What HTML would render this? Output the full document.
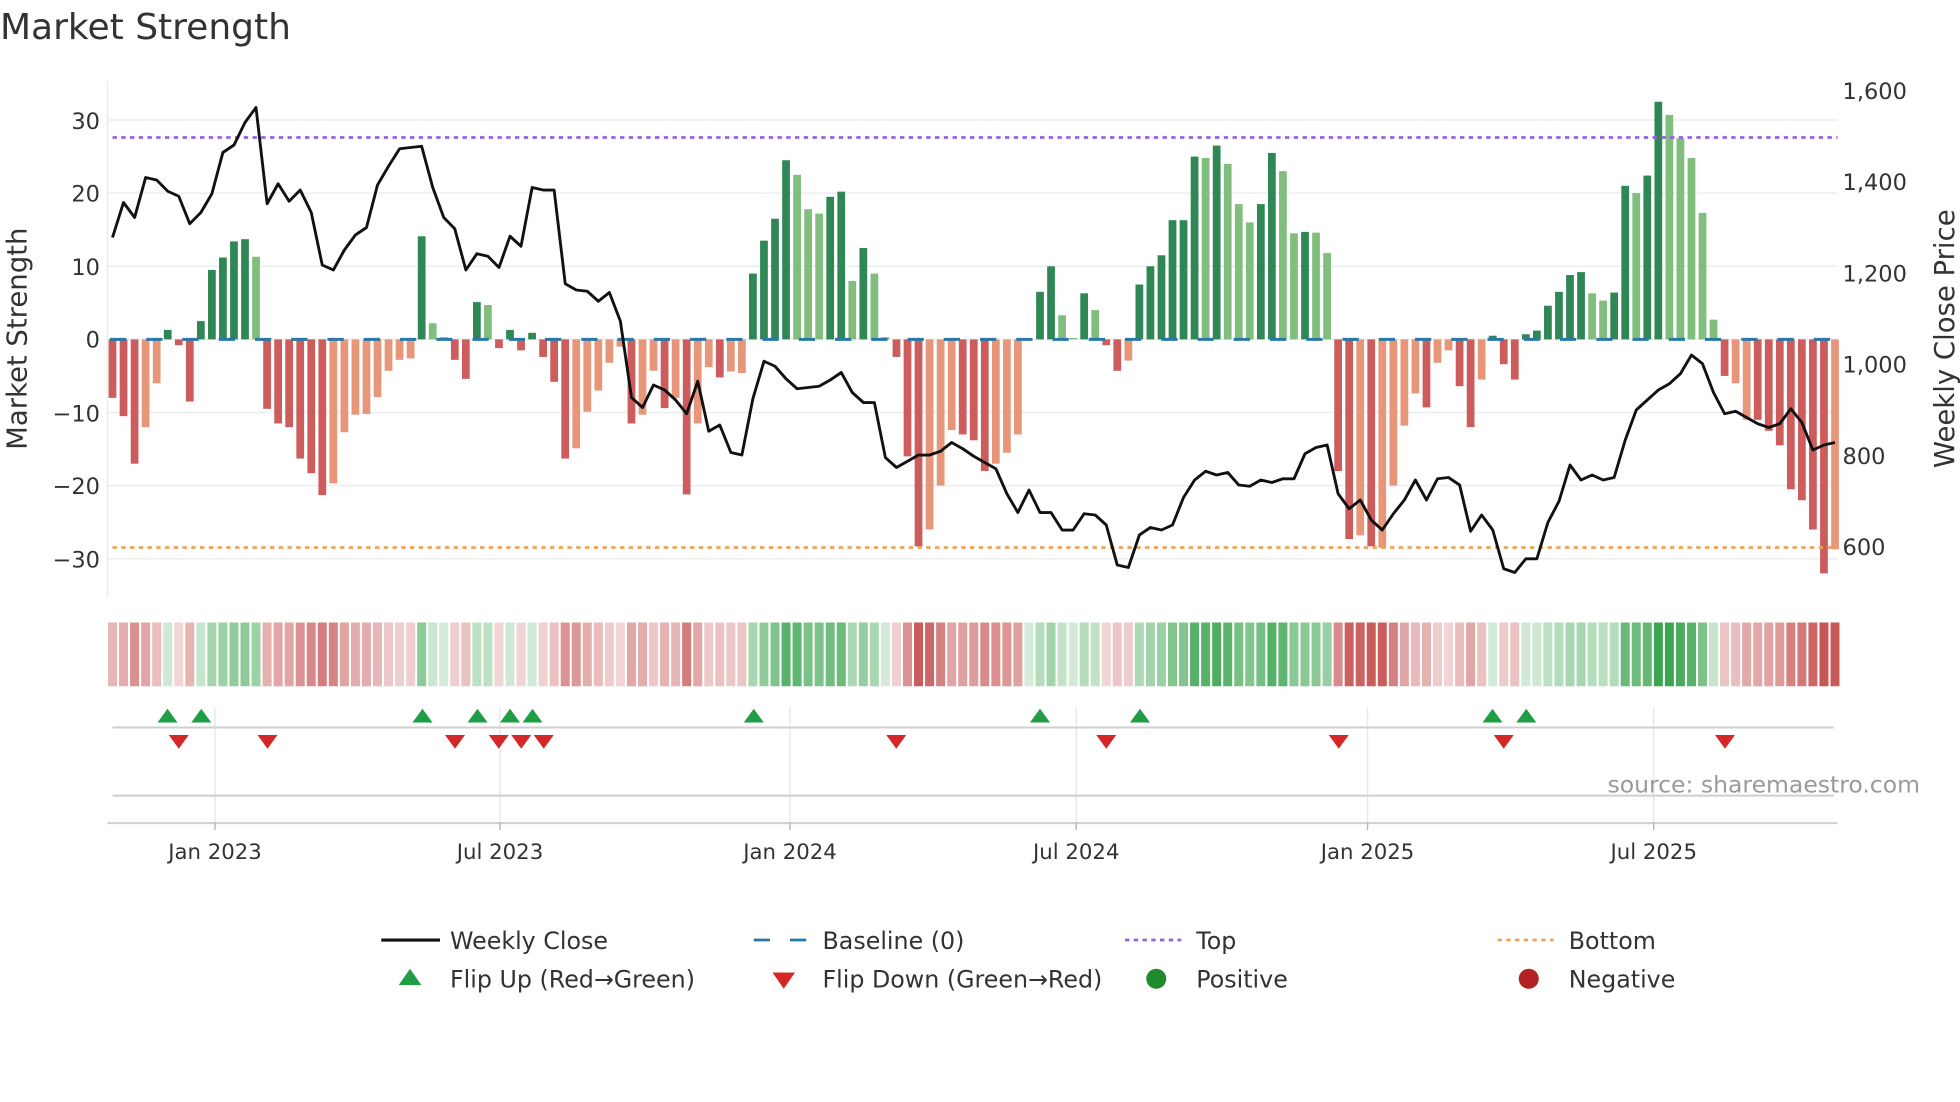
<!DOCTYPE html>
<html><head><meta charset="utf-8"><style>
html,body{margin:0;padding:0;background:#fff;width:1960px;height:1102px;overflow:hidden}
svg{display:block;font-family:"DejaVu Sans","Liberation Sans",sans-serif}
</style></head><body>
<svg id="c" width="1960" height="1102" viewBox="0 0 1568 881.6" xmlns="http://www.w3.org/2000/svg">
<rect width="1568" height="882" fill="#fff"/>
<text x="0" y="31" font-size="28.8" fill="#333">Market Strength</text>
<g id="grid" stroke="#ebedf0" stroke-width="1.2">
<line x1="86" y1="96" x2="1470" y2="96"/><line x1="86" y1="154.5" x2="1470" y2="154.5"/><line x1="86" y1="213" x2="1470" y2="213"/><line x1="86" y1="271.5" x2="1470" y2="271.5"/><line x1="86" y1="330" x2="1470" y2="330"/><line x1="86" y1="388.5" x2="1470" y2="388.5"/><line x1="86" y1="447" x2="1470" y2="447"/>
<line x1="86" y1="65" x2="86" y2="478"/>
</g>
<g font-size="18" fill="#333" text-anchor="end">
<text x="80" y="103">30</text><text x="80" y="161">20</text><text x="80" y="220">10</text><text x="80" y="278">0</text><text x="80" y="337">−10</text><text x="80" y="395">−20</text><text x="80" y="454">−30</text>
</g>
<g font-size="18" fill="#333">
<text x="1474" y="79">1,600</text><text x="1474" y="152">1,400</text><text x="1474" y="225">1,200</text><text x="1474" y="298">1,000</text><text x="1474" y="371">800</text><text x="1474" y="444">600</text>
</g>
<text transform="translate(21,271) rotate(-90)" font-size="22" fill="#333" text-anchor="middle">Market Strength</text>
<text transform="translate(1563,271) rotate(-90)" font-size="22" fill="#333" text-anchor="middle">Weekly Close Price</text>
<g id="bars"></g>
<line x1="88" y1="271.5" x2="1470" y2="271.5" stroke="#2a78a8" stroke-width="2.4" stroke-dasharray="13 16"/>
<line x1="90" y1="110" x2="1470" y2="110" stroke="#9b5fe0" stroke-width="2.2" stroke-dasharray="3.5 3.5"/>
<line x1="90" y1="438" x2="1470" y2="438" stroke="#f0a25a" stroke-width="2.2" stroke-dasharray="3.5 3.5"/>
<polyline id="price" fill="none" stroke="#111" stroke-width="2.3" stroke-linejoin="round"/>
<g id="heat"></g>
<g stroke="#e6e8ec" stroke-width="1.2">
<line x1="172" y1="566" x2="172" y2="658"/><line x1="400" y1="566" x2="400" y2="658"/><line x1="632" y1="566" x2="632" y2="658"/><line x1="861" y1="566" x2="861" y2="658"/><line x1="1094" y1="566" x2="1094" y2="658"/><line x1="1323" y1="566" x2="1323" y2="658"/>
</g>
<line x1="90" y1="582" x2="1467" y2="582" stroke="#cfcfcf" stroke-width="1.6"/>
<line x1="90" y1="636.5" x2="1467" y2="636.5" stroke="#cfcfcf" stroke-width="1.6"/>
<line x1="86" y1="658.5" x2="1470" y2="658.5" stroke="#cfcfcf" stroke-width="1.6"/>
<g stroke="#bbb" stroke-width="1.2">
<line x1="172" y1="658" x2="172" y2="664"/><line x1="400" y1="658" x2="400" y2="664"/><line x1="632" y1="658" x2="632" y2="664"/><line x1="861" y1="658" x2="861" y2="664"/><line x1="1094" y1="658" x2="1094" y2="664"/><line x1="1323" y1="658" x2="1323" y2="664"/>
</g>
<g id="marks"></g>
<g font-size="17" fill="#333" text-anchor="middle">
<text x="172" y="687">Jan 2023</text><text x="400" y="687">Jul 2023</text><text x="632" y="687">Jan 2024</text><text x="861" y="687">Jul 2024</text><text x="1094" y="687">Jan 2025</text><text x="1323" y="687">Jul 2025</text>
</g>
<text x="1536" y="634" font-size="18.8" fill="#9a9a9a" text-anchor="end">source: sharemaestro.com</text>
<g font-size="19" fill="#333">
<line x1="305" y1="752" x2="352" y2="752" stroke="#111" stroke-width="2.5"/><text x="360" y="759">Weekly Close</text>
<line x1="603" y1="752" x2="647" y2="752" stroke="#2a78a8" stroke-width="2.2" stroke-dasharray="13 16"/><text x="658" y="759">Baseline (0)</text>
<line x1="900" y1="752" x2="945" y2="752" stroke="#9b5fe0" stroke-width="2.2" stroke-dasharray="3.5 3.5"/><text x="957" y="759">Top</text>
<line x1="1198" y1="752" x2="1243" y2="752" stroke="#f0a25a" stroke-width="2.2" stroke-dasharray="3.5 3.5"/><text x="1255" y="759">Bottom</text>
<polygon points="319,788 337,788 328,775" fill="#1f9e45"/><text x="360" y="790">Flip Up (Red→Green)</text>
<polygon points="618,778 636,778 627,791" fill="#d62728"/><text x="658" y="790">Flip Down (Green→Red)</text>
<circle cx="925" cy="783" r="8" fill="#1f8a2e"/><text x="957" y="790">Positive</text>
<circle cx="1223" cy="783" r="8" fill="#b22222"/><text x="1255" y="790">Negative</text>
</g>
</svg>
<script>
var V=[[-8,'r'],[-10.5,'r'],[-17,'r'],[-12,'l'],[-6,'l'],[1.3,'G'],[-0.8,'r'],[-8.5,'r'],[2.5,'G'],[9.5,'G'],[11.2,'G'],[13.4,'G'],[13.7,'G'],[11.3,'g'],[-9.5,'r'],[-11.5,'r'],[-12,'r'],[-16.3,'r'],[-18.3,'r'],[-21.3,'r'],[-19.7,'l'],[-12.7,'l'],[-10.3,'l'],[-10.2,'l'],[-7.9,'l'],[-4.3,'l'],[-2.8,'l'],[-2.6,'l'],[14.1,'G'],[2.2,'g'],[0.3,'g'],[-2.8,'r'],[-5.4,'r'],[5.1,'G'],[4.7,'g'],[-1.2,'r'],[1.3,'G'],[-1.5,'r'],[0.9,'G'],[-2.4,'r'],[-5.8,'r'],[-16.3,'r'],[-14.9,'l'],[-9.9,'l'],[-7,'l'],[-3.2,'l'],[-1,'l'],[-11.5,'r'],[-10.3,'l'],[-4.3,'l'],[-9.4,'r'],[-8,'l'],[-21.2,'r'],[-11.5,'l'],[-3.8,'l'],[-5.2,'r'],[-4.4,'l'],[-4.6,'l'],[9,'G'],[13.5,'G'],[16.5,'G'],[24.5,'G'],[22.5,'g'],[17.8,'g'],[17.2,'g'],[19.5,'G'],[20.2,'G'],[8,'g'],[12.5,'G'],[9,'g'],[0.3,'g'],[-2.4,'r'],[-16,'r'],[-28.3,'r'],[-26,'l'],[-20,'l'],[-12.4,'l'],[-13,'r'],[-13.8,'r'],[-18,'r'],[-17,'l'],[-15.5,'l'],[-13,'l'],[0.1,'g'],[6.5,'G'],[10,'G'],[3.3,'g'],[0.2,'g'],[6.3,'G'],[4,'g'],[-0.8,'r'],[-4.3,'r'],[-2.9,'l'],[7.5,'G'],[10,'G'],[11.5,'G'],[16.3,'G'],[16.3,'G'],[25,'G'],[24.8,'g'],[26.5,'G'],[24,'g'],[18.5,'g'],[16,'g'],[18.5,'G'],[25.5,'G'],[23,'g'],[14.5,'g'],[14.7,'G'],[14.6,'g'],[11.8,'g'],[-18,'r'],[-27.3,'r'],[-26.8,'l'],[-28.3,'r'],[-28.5,'l'],[-20,'l'],[-11.8,'l'],[-7.4,'l'],[-9.3,'r'],[-3.2,'l'],[-1.5,'l'],[-6.4,'r'],[-12,'r'],[-5.5,'l'],[0.5,'G'],[-3.4,'r'],[-5.5,'r'],[0.7,'G'],[1.2,'G'],[4.6,'G'],[6.5,'G'],[8.8,'G'],[9.2,'G'],[6.3,'g'],[5.3,'g'],[6.4,'G'],[21,'G'],[20,'g'],[22.4,'G'],[32.5,'G'],[30.7,'g'],[27.5,'g'],[24.8,'g'],[17.3,'g'],[2.7,'g'],[-5,'r'],[-6,'l'],[-11,'l'],[-11,'r'],[-12.5,'r'],[-14.5,'r'],[-20.5,'r'],[-22,'r'],[-26,'r'],[-32,'r'],[-28.7,'l']];
var C={G:'#2e8755',g:'#80be7e',r:'#cd5c5c',l:'#e8967a'};
var NS='http://www.w3.org/2000/svg';
function el(t,a,p){var e=document.createElementNS(NS,t);for(var k in a)e.setAttribute(k,a[k]);document.getElementById(p).appendChild(e);return e;}
var step=(1468-90)/156;
V.forEach(function(v,i){var x=90+i*step,h=Math.abs(v[0])*5.85,y=v[0]>=0?271.5-h:271.5;
el('rect',{x:(x-3.1).toFixed(2),y:y.toFixed(2),width:6.2,height:Math.max(h,0.6).toFixed(2),fill:C[v[1]]},'bars');
var a=Math.min(1,0.22+0.78*Math.abs(v[0])/30);
var col=v[0]>=0?'rgba(60,165,80,'+a.toFixed(2)+')':'rgba(200,85,85,'+a.toFixed(2)+')';
el('rect',{x:(x-3.6).toFixed(2),y:498,width:7.2,height:51,fill:col},'heat');});
var P=[190,162,174,142,144,153,157,179,170,155,122,116,98,86,163,147,161,152,170,212,216,200,188,182,148,133,119,118,117,150,174,183,216,203,205,214,189,197,150,152,152,227,232,233,241,234,257,318,326,308,312,320,331,305,345,340,362,364,319,289,293,303,311,310,309,304,298,314,322,322,366,374,369,364,364,361,354,359,365,370,375,395,410,392,410,410,424,424,411,412,420,452,454,428,422,424,420,398,384,377,380,378,388,389,384,386,383,383,363,358,356,395,407,400,416,424,411,400,384,400,383,382,388,425,412,424,455,458,447,447,418,401,372,384,380,384,382,352,328,320,312,307,299,284,291,314,331,329,334,339,342,339,327,338,360,356,354];
var pts=P.map(function(y,i){return (90+i*step).toFixed(1)+','+y;}).join(' ');
document.getElementById('price').setAttribute('points',pts);
[134,161,338,382,408,426,603,832,912,1194,1221].forEach(function(x){el('polygon',{points:(x-8)+',578 '+(x+8)+',578 '+x+',567',fill:'#1f9e45'},'marks');});
[143,214,364,399,417,435,717,885,1071,1203,1380].forEach(function(x){el('polygon',{points:(x-8)+',588 '+(x+8)+',588 '+x+',599',fill:'#d62728'},'marks');});
</script>
</body></html>
